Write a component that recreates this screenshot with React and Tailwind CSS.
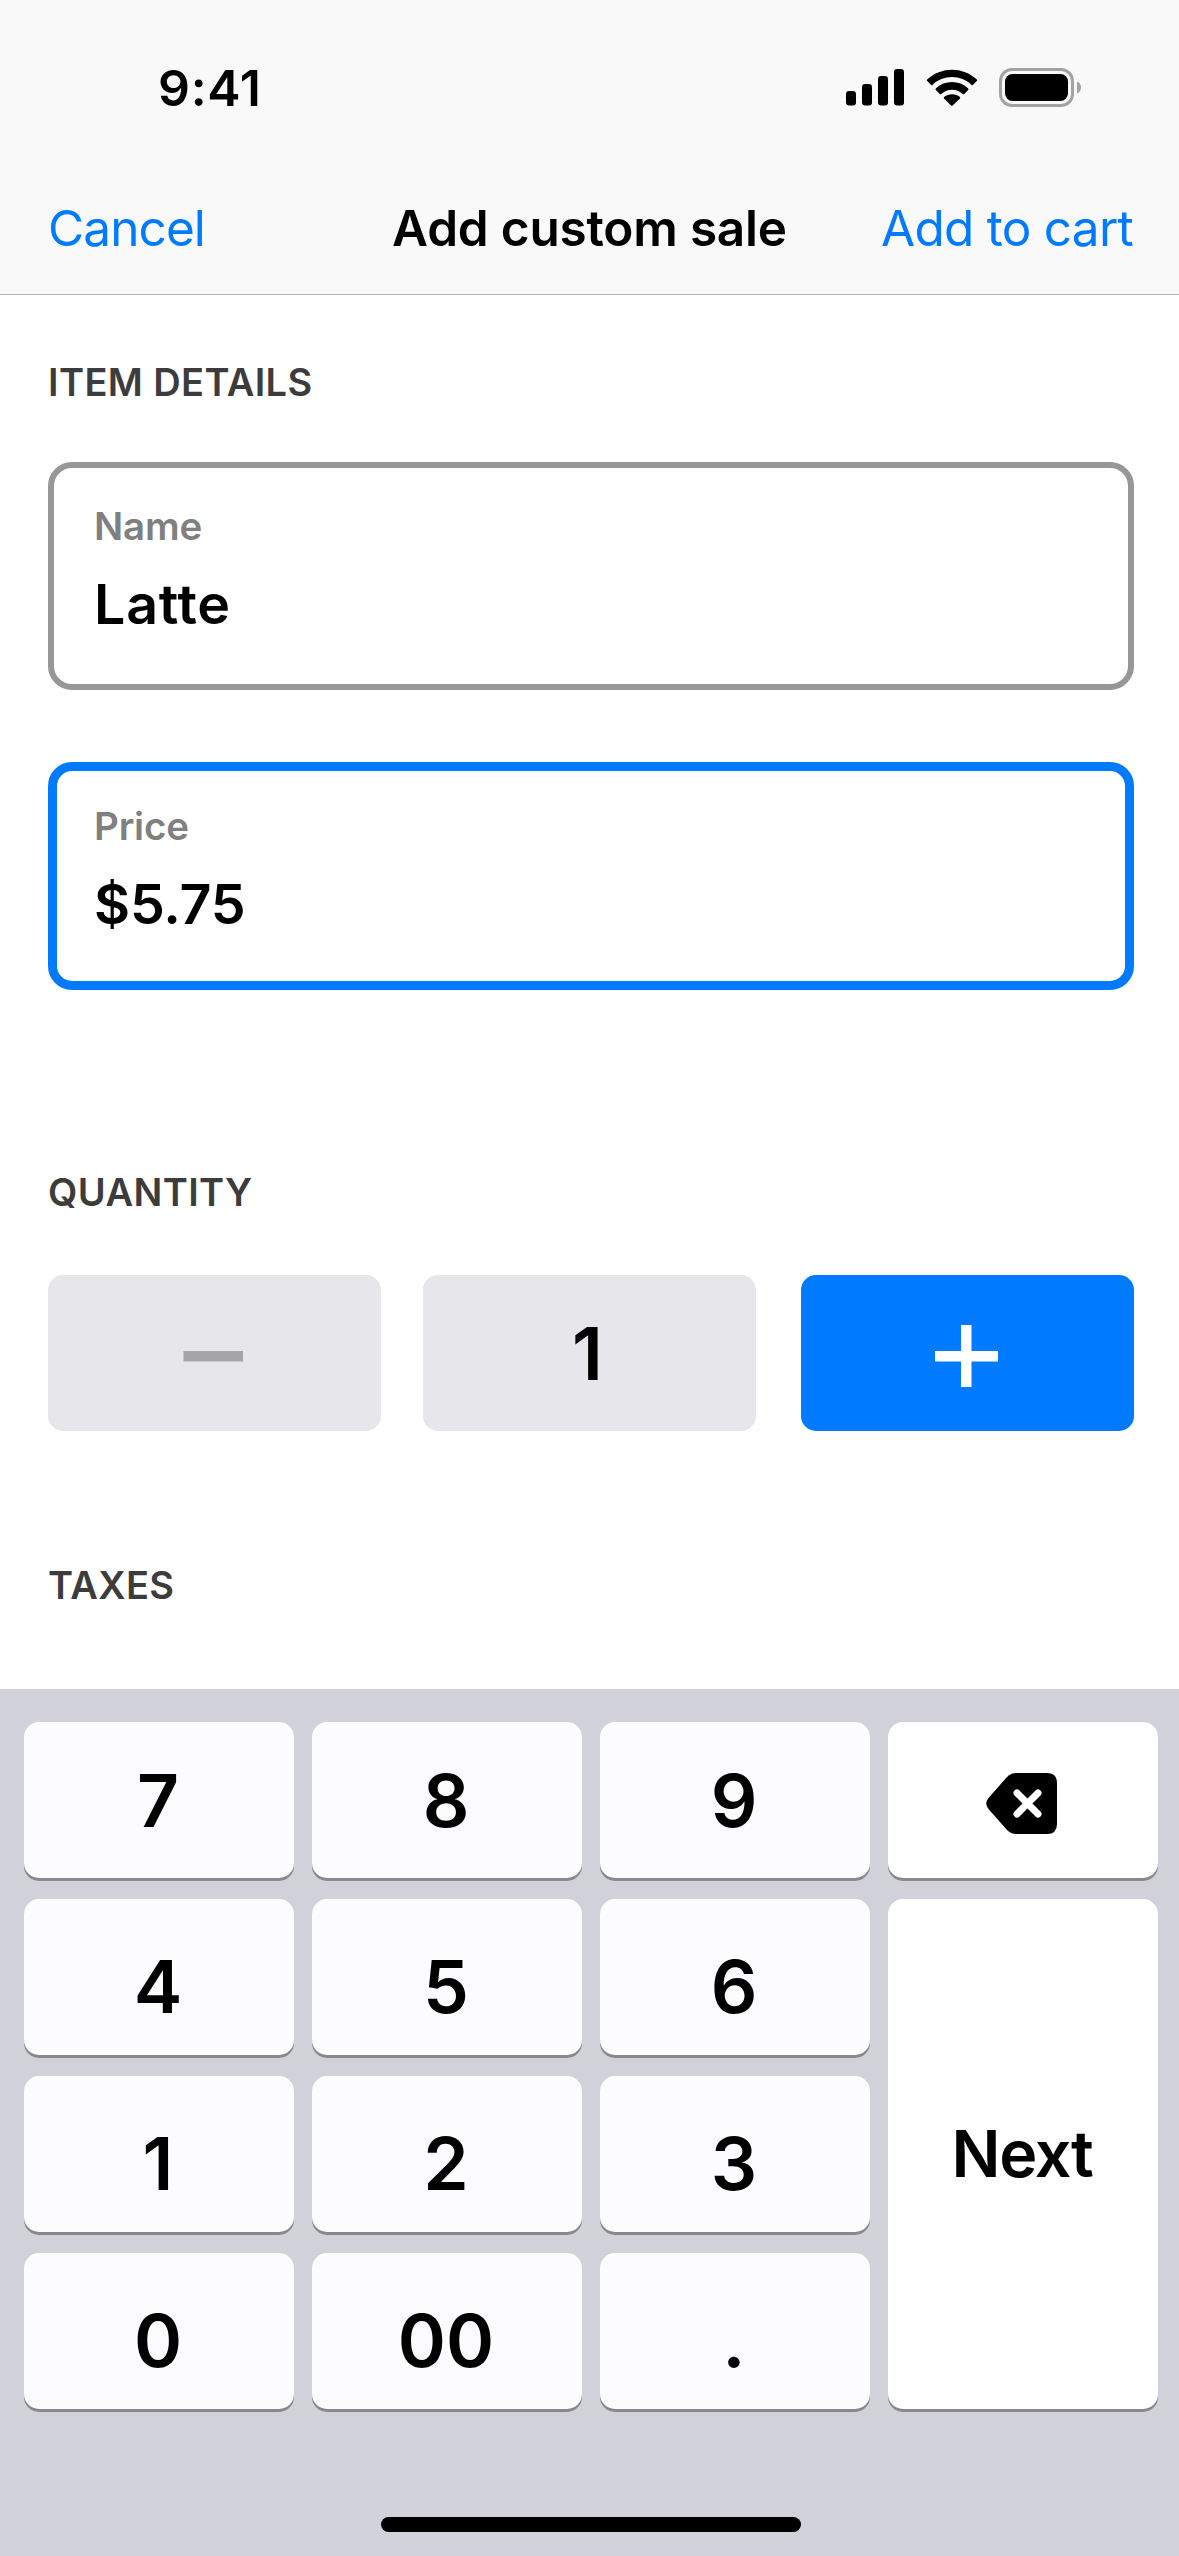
import React, { useState } from 'react';

const StatusIcons = () => (
  <div className="flex items-center">
    {/* Cellular */}
    <svg className="w-[58px] h-[37px]" viewBox="0 0 58 37" fill="#000">
      <rect x="0" y="22" width="10" height="14.5" rx="3.2" />
      <rect x="16" y="15" width="10" height="21.5" rx="3.2" />
      <rect x="32" y="7" width="10" height="29.5" rx="3.2" />
      <rect x="48" y="0" width="10" height="36.5" rx="3.2" />
    </svg>
    {/* Wifi */}
    <svg className="w-[52px] h-[37px] ml-[22px]" viewBox="0 0 17 12" fill="#000">
      <path d="M8.5 2.6c2.4 0 4.7.9 6.4 2.6.1.1.3.1.4 0l1.3-1.3c.2-.2.2-.4 0-.5C12.1-.9 4.9-.9.4 3.4c-.2.1-.2.3 0 .5l1.3 1.3c.1.1.3.1.4 0C3.8 3.5 6.1 2.6 8.5 2.6z" />
      <path d="M8.5 6.7c1.3 0 2.6.5 3.5 1.4.1.1.3.1.5 0l1.3-1.3c.1-.2.1-.4 0-.5-3-2.8-7.6-2.8-10.6 0-.1.1-.1.3 0 .5l1.3 1.3c.2.1.4.1.5 0 1-.9 2.2-1.4 3.5-1.4z" />
      <path d="M11.1 9.6c.1-.2.1-.4 0-.5-1.5-1.2-3.7-1.2-5.2 0-.1.1-.1.3 0 .5l2.3 2.3c.1.1.3.1.5 0z" />
    </svg>
    {/* Battery */}
    <svg className="w-[82px] h-[39px] ml-[21px]" viewBox="0 0 82 39">
      <rect x="1.5" y="1.5" width="72" height="36" rx="11.5" fill="none" stroke="#a3a3a3" strokeWidth="3" />
      <rect x="6" y="6" width="63" height="27" rx="7.5" fill="#000" />
      <path d="M78 13.5c2.5 1 4 3.3 4 6s-1.5 5-4 6z" fill="#a3a3a3" />
    </svg>
  </div>
);

const SectionTitle = ({ children }) => (
  <h2 className="h-10 leading-10 text-[38px] font-semibold text-[#3c3c3c] tracking-[0.4px]">{children}</h2>
);

const Field = ({ label, value, focused }) => (
  <div
    className={`h-[228px] rounded-[24px] ${
      focused ? 'border-9 border-[#007aff] px-[37px] pt-[35px]' : 'border-6 border-[#979797] px-10 pt-[38px]'
    }`}
  >
    <div className="h-10 leading-10 text-[38.5px] font-semibold text-[#808080] tracking-[-0.2px]">{label}</div>
    <div
      className={`mt-[28px] h-[60px] leading-[60px] text-[55.5px] font-semibold text-black ${
        focused ? 'tracking-[-0.2px]' : 'tracking-[0.8px]'
      }`}
    >
      {value}
    </div>
  </div>
);

const Key = ({ children, className = '' }) => (
  <button
    className={`flex items-center justify-center rounded-[15px] shadow-[0_3px_0_#89898c] leading-none font-semibold text-black ${className}`}
  >
    {children}
  </button>
);

const DeleteIcon = () => (
  <svg className="w-[71px] h-[61px]" viewBox="0 0 71 61">
    <path
      d="M30 0H61Q71 0 71 10V51Q71 61 61 61H30Q25 61 21 57L2.5 36Q-2 30.5 2.5 25L21 4Q25 0 30 0z"
      fill="#000"
    />
    <path d="M31 20L52 41M52 20L31 41" stroke="#fff" strokeWidth="7" strokeLinecap="round" />
  </svg>
);

const topKeys = ['7', '8', '9'];
const digitKeys = ['4', '5', '6', '1', '2', '3', '0', '00', '.'];

const App = () => {
  const [quantity, setQuantity] = useState(1);

  return (
    <div className="w-[1179px] h-[2556px] flex flex-col bg-white overflow-hidden font-['Inter',sans-serif]">
      {/* Status bar + navigation */}
      <header className="h-[295px] bg-[#f9f9f9] border-b border-[#b2b2b2]">
        <div className="h-[175px] pl-[158px] pr-[98px] flex items-center justify-between">
          <span className="text-[50px] leading-none font-semibold text-black tracking-[0.7px]">9:41</span>
          <StatusIcons />
        </div>
        <nav className="h-[108px] pl-12 pr-[46px] grid grid-cols-[1fr_auto_1fr] items-center text-[49.5px] leading-none">
          <button className="text-left text-[#007aff] tracking-[-0.9px]">Cancel</button>
          <h1 className="pr-[2px] font-semibold text-black tracking-[-0.2px]">Add custom sale</h1>
          <button className="text-right text-[#007aff] tracking-[-0.75px]">Add to cart</button>
        </nav>
      </header>

      <main className="h-[1394px] pl-12 pt-[67px] pr-[45px]">
        <SectionTitle>ITEM DETAILS</SectionTitle>
        <div className="mt-[60px] flex flex-col gap-[72px]">
          <Field label="Name" value="Latte" />
          <Field label="Price" value="$5.75" focused />
        </div>

        <div className="mt-[182px]">
          <SectionTitle>QUANTITY</SectionTitle>
        </div>
        <div className="mt-[63px] h-[156px] flex">
          <button
            onClick={() => setQuantity(Math.max(1, quantity - 1))}
            className="w-[333px] pt-[6px] rounded-[15px] bg-[#e6e6eb] flex items-center justify-center"
          >
            <svg className="w-[63px] h-[62px]" viewBox="0 0 63 62">
              <rect x="0.5" y="26" width="59.5" height="10.5" fill="#a5a5a7" />
            </svg>
          </button>
          <div className="ml-[42px] w-[333px] pr-[4px] rounded-[15px] bg-[#e6e6eb] flex items-center justify-center text-[73px] leading-none font-semibold">
            {quantity}
          </div>
          <button
            onClick={() => setQuantity(quantity + 1)}
            className="ml-[45px] w-[333px] pt-[6px] pr-[2px] rounded-[15px] bg-[#007aff] flex items-center justify-center"
          >
            <svg className="w-[63px] h-[62px]" viewBox="0 0 63 62" fill="#fff">
              <rect x="0" y="26" width="63" height="10.5" />
              <rect x="26" y="0" width="10.5" height="62" />
            </svg>
          </button>
        </div>

        <div className="mt-[134px]">
          <SectionTitle>TAXES</SectionTitle>
        </div>
      </main>

      {/* Keypad */}
      <section className="flex-1 bg-[#d1d1da] pt-[33px] pl-6 flex flex-col">
        <div className="grid grid-cols-[repeat(4,270px)] auto-rows-[156px] gap-x-[18px] gap-y-[21px]">
          {topKeys.map((key) => (
            <Key key={key} className="bg-[#fcfcfe] pr-[2px] text-[73px]">{key}</Key>
          ))}
          <Key className="bg-white pt-[7px] pr-[3px]">
            <DeleteIcon />
          </Key>
          <Key className="bg-white col-start-4 row-start-2 row-span-3 pt-px pr-[2px] text-[64.5px] tracking-[-1.3px]">Next</Key>
          {digitKeys.map((key) => (
            <Key key={key} className="bg-[#fcfcfe] pt-[19px] pr-[2px] text-[73px]">{key}</Key>
          ))}
        </div>
        <div className="mt-[108px] ml-[357px] w-[420px] h-[15px] rounded-full bg-black" />
      </section>
    </div>
  );
};

export default App;
